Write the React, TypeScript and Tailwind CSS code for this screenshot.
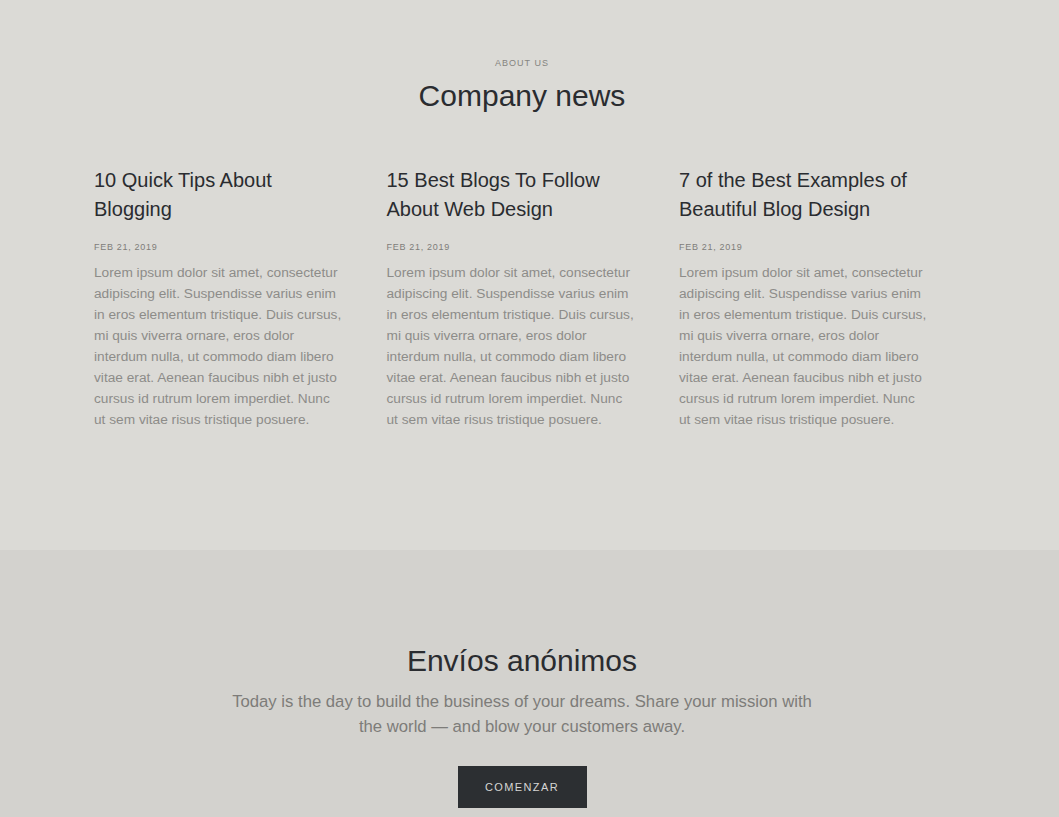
const font = "font-['Liberation_Sans',Arial,sans-serif]";

type Post = { title: string; date: string };

const POSTS: Post[] = [
  { title: "10 Quick Tips About Blogging", date: "Feb 21, 2019" },
  { title: "15 Best Blogs To Follow About Web Design", date: "Feb 21, 2019" },
  { title: "7 of the Best Examples of Beautiful Blog Design", date: "Feb 21, 2019" },
];

const LOREM =
  "Lorem ipsum dolor sit amet, consectetur adipiscing elit. Suspendisse varius enim in eros elementum tristique. Duis cursus, mi quis viverra ornare, eros dolor interdum nulla, ut commodo diam libero vitae erat. Aenean faucibus nibh et justo cursus id rutrum lorem imperdiet. Nunc ut sem vitae risus tristique posuere.";

function PostCard({ post }: { post: Post }) {
  return (
    <article className="w-[248px]">
      <h3 className="text-[20px] leading-[29px] text-[#2a2c30]">{post.title}</h3>
      <div className="mt-[17px] text-[9px] leading-[12px] uppercase tracking-[0.7px] text-[#7e7d7a]">
        {post.date}
      </div>
      <p className="mt-[9px] text-[13.7px] leading-[21px] text-[#8d8c89]">{LOREM}</p>
    </article>
  );
}

export default function App() {
  return (
    <div className={`${font} min-h-screen bg-[#d3d2ce]`}>
      {/* Company news */}
      <section className="bg-[#dbdad6] pt-[56px] pb-[120px] pr-[15px]">
        <div className="text-center">
          <div className="text-[9px] leading-[14px] uppercase tracking-[1px] text-[#85847f]">
            About us
          </div>
          <h2 className="mt-[8px] text-[30px] leading-[36px] font-light text-[#2a2c30]">
            Company news
          </h2>
        </div>
        <div className="mx-auto mt-[52px] grid w-[856px] grid-cols-3 gap-x-[21.5px]">
          {POSTS.map((p) => (
            <PostCard key={p.title} post={p} />
          ))}
        </div>
      </section>

      {/* Call to action */}
      <section className="pt-[93px] pb-[100px] pr-[15px] text-center">
        <h2 className="text-[30px] leading-[36px] font-light text-[#2a2c30]">Envíos anónimos</h2>
        <p className="mx-auto mt-[10px] max-w-[592px] text-[16.7px] leading-[25px] text-[#7d7c79]">
          Today is the day to build the business of your dreams. Share your mission with the
          world — and blow your customers away.
        </p>
        <button
          type="button"
          className="mt-[27px] h-[42px] w-[129px] bg-[#2c2f32] text-[11px] uppercase tracking-[1.4px] text-[#d6d6d4]"
        >
          Comenzar
        </button>
      </section>
    </div>
  );
}
